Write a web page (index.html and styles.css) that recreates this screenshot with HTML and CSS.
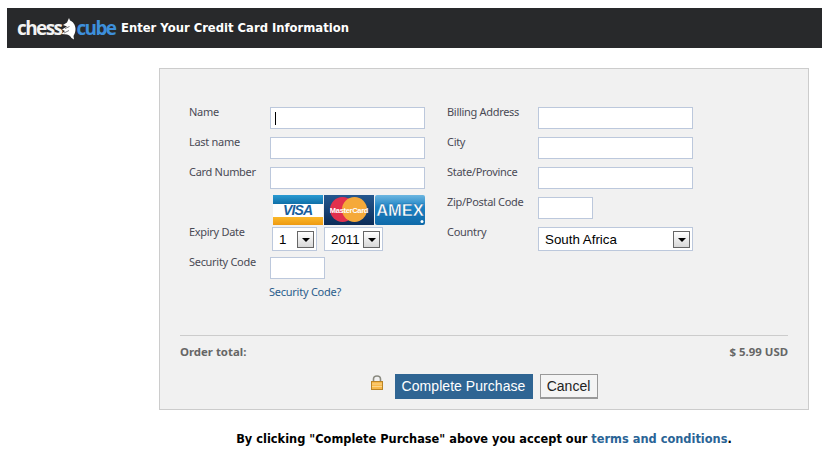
FILE: index.html
```html
<!DOCTYPE html>
<html lang="en">
  <head>
    <meta charset="UTF-8" />
    <meta name="viewport" content="width=device-width, initial-scale=1.0" />
    <title>Enter Your Credit Card Information</title>
    <link rel="stylesheet" href="styles.css">
  </head>
  <body>
    <div class="header">
      <div class="logo">
        <span class="logo-chess">chess</span>
        <svg class="knight" width="15" height="22" viewBox="0 0 15 22">
          <path d="M8 0 L9 2.5 C12 3.5 14.5 7 14.5 11 C14.5 14 13.5 16 12.5 18 L13 21.5 L10.5 20 C9.5 18 8 17 6 16.5 L0.5 16 L4 13 L1 11.5 L6 8.5 L2 7 L6 4.5 Z" fill="#fff" />
          <path d="M3 15 L8 12.5 M4 10.5 L8.5 8.5" stroke="#77797c" stroke-width="1" fill="none" />
        </svg>
        <span class="logo-cube">cube</span>
      </div>
      <h1>Enter Your Credit Card Information</h1>
    </div>

    <form class="panel">
      <div class="columns">
        <div class="col col-left">
          <div class="row">
            <label for="name">Name</label>
            <input type="text" id="name" class="has-caret" />
          </div>
          <div class="row">
            <label for="lastname">Last name</label>
            <input type="text" id="lastname" />
          </div>
          <div class="row">
            <label for="card">Card Number</label>
            <input type="text" id="card" />
          </div>
          <div class="cards">
            <svg width="50" height="30" viewBox="0 0 50 30">
              <defs>
                <linearGradient id="visaTop" x1="0" y1="0" x2="0" y2="1">
                  <stop offset="0" stop-color="#2a9bd2" />
                  <stop offset="1" stop-color="#0f6fa8" />
                </linearGradient>
                <linearGradient id="visaBottom" x1="0" y1="0" x2="0" y2="1">
                  <stop offset="0" stop-color="#fbb829" />
                  <stop offset="1" stop-color="#ee9a12" />
                </linearGradient>
                <linearGradient id="mcBack" x1="0" y1="0" x2="0" y2="1">
                  <stop offset="0" stop-color="#24588f" />
                  <stop offset="1" stop-color="#0c2c58" />
                </linearGradient>
                <linearGradient id="amexBack" x1="0" y1="0" x2="0" y2="1">
                  <stop offset="0" stop-color="#6cb6e0" />
                  <stop offset="0.4" stop-color="#1c82c4" />
                  <stop offset="1" stop-color="#0f69a8" />
                </linearGradient>
              </defs>
              <rect width="50" height="30" fill="#fff" />
              <rect width="50" height="9" fill="url(#visaTop)" />
              <rect y="22" width="50" height="8" fill="url(#visaBottom)" />
              <text x="25" y="20" class="visa-text" textLength="30">VISA</text>
            </svg>
            <svg width="50" height="30" viewBox="0 0 50 30">
              <rect width="50" height="30" fill="url(#mcBack)" />
              <circle cx="18.5" cy="14.5" r="12.5" fill="#e2304d" />
              <circle cx="30.5" cy="14.5" r="12.5" fill="#f5a93a" />
              <text x="25" y="18" class="mc-text">MasterCard</text>
            </svg>
            <svg width="50" height="30" viewBox="0 0 50 30">
              <rect width="50" height="30" rx="2" fill="url(#amexBack)" />
              <text x="25" y="21" class="amex-text">AMEX</text>
              <circle cx="47" cy="26.5" r="1.5" fill="#fff" />
            </svg>
          </div>
          <div class="row row-select">
            <label>Expiry Date</label>
            <div class="select select-month">
              <span>1</span>
              <span class="arrow"></span>
            </div>
            <div class="select select-year">
              <span>2011</span>
              <span class="arrow"></span>
            </div>
          </div>
          <div class="row">
            <label for="code">Security Code</label>
            <input type="text" id="code" class="short" />
          </div>
          <a class="help" href="#">Security Code?</a>
        </div>

        <div class="col col-right">
          <div class="row">
            <label for="address">Billing Address</label>
            <input type="text" id="address" />
          </div>
          <div class="row">
            <label for="city">City</label>
            <input type="text" id="city" />
          </div>
          <div class="row">
            <label for="state">State/Province</label>
            <input type="text" id="state" />
          </div>
          <div class="row">
            <label for="zip">Zip/Postal Code</label>
            <input type="text" id="zip" class="short" />
          </div>
          <div class="row row-select">
            <label>Country</label>
            <div class="select select-country">
              <span>South Africa</span>
              <span class="arrow"></span>
            </div>
          </div>
        </div>
      </div>

      <div class="order">
        <span>Order total:</span>
        <span>$ 5.99 USD</span>
      </div>

      <div class="actions">
        <svg class="lock" width="12" height="15" viewBox="0 0 12 15">
          <path d="M2.5 7 V4 C2.5 0 9.5 0 9.5 4 V7" fill="none" stroke="#8a8a80" stroke-width="1.6" />
          <rect x="0.5" y="6.5" width="11" height="8" fill="#f8b84a" stroke="#b98428" />
          <path d="M1 9 H11 M1 11.5 H11" stroke="#fbd68c" />
        </svg>
        <button type="button" class="btn btn-primary">Complete Purchase</button>
        <button type="button" class="btn btn-cancel">Cancel</button>
      </div>
    </form>

    <p class="terms">By clicking "Complete Purchase" above you accept our <a href="#">terms and conditions</a>.</p>
  </body>
</html>
```

FILE: styles.css
```css
* {
  margin: 0;
  padding: 0;
  box-sizing: border-box;
}
body {
  font-family: "Noto Sans", sans-serif;
  background: #fff;
  padding: 8px 0 0 7px;
  overflow: hidden;
}

.header {
  height: 40px;
  background: #28292b;
  display: flex;
  align-items: center;
  padding-left: 10px;
}
.logo {
  display: flex;
  align-items: center;
  width: 104px;
  height: 40px;
  font-family: "Open Sans", sans-serif;
  font-size: 19px;
  font-weight: 700;
  letter-spacing: -1.6px;
}
.logo-chess {
  color: #f2f2f2;
}
.logo-cube {
  color: #3d8fdb;
}
.knight {
  flex: none;
  margin-top: 1px;
}
.header h1 {
  font-family: "DejaVu Sans", sans-serif;
  font-size: 11.6px;
  font-weight: bold;
  color: #fff;
}

.panel {
  width: 650px;
  height: 342px;
  margin: 20px 0 0 152px;
  padding: 38px 20px 0;
  background: #f1f1f1;
  border: 1px solid #ccc;
}
.columns {
  display: flex;
  height: 228px;
  padding-left: 9px;
}
.col-left {
  width: 258px;
}
.col-left label {
  width: 81px;
}
.col-right label {
  width: 91px;
}

.row {
  display: flex;
  align-items: flex-start;
  height: 30px;
}
label {
  flex: none;
  font-size: 11px;
  line-height: 12px;
  letter-spacing: -0.3px;
  margin-top: -1px;
  color: #4a4a55;
}
input {
  width: 155px;
  height: 22px;
  background: #fff;
  border: 1px solid #bcc8dc;
  outline: none;
}
input.short {
  width: 55px;
}
input.has-caret {
  background: #fff linear-gradient(#000, #000) no-repeat 4px 4px / 1px 13px;
}

.cards {
  display: flex;
  gap: 1px;
  height: 32px;
  margin: -2px 0 0 84px;
}
.cards svg {
  display: block;
}
.visa-text {
  font: italic bold 14px "Liberation Sans", sans-serif;
  fill: #175f9e;
  text-anchor: middle;
}
.mc-text {
  font: bold 7.5px "Liberation Sans", sans-serif;
  letter-spacing: -0.3px;
  fill: #fff;
  text-anchor: middle;
}
.amex-text {
  font: bold 16.5px "Liberation Sans", sans-serif;
  fill: #fff;
  stroke: #0f5f9e;
  stroke-width: 0.4px;
  text-anchor: middle;
}

.select {
  display: flex;
  align-items: center;
  justify-content: space-between;
  height: 24px;
  padding: 0 2px 0 6px;
  background: #fff;
  border: 1px solid #bcc8dc;
  font-family: "Liberation Sans", sans-serif;
  font-size: 13.33px;
  color: #000;
}
.select-month {
  width: 45px;
  margin-left: 2px;
}
.select-year {
  width: 59px;
  margin-left: 7px;
}
.select-country {
  width: 155px;
}
.arrow {
  width: 17px;
  height: 17px;
  border: 1px solid #666;
  background: linear-gradient(#fff, #d8d8d8);
  position: relative;
}
.arrow::after {
  content: "";
  position: absolute;
  left: 4px;
  top: 6px;
  border-top: 4px solid #000;
  border-left: 4px solid transparent;
  border-right: 4px solid transparent;
}

.help {
  display: block;
  margin: -2px 0 0 80px;
  font-size: 11px;
  line-height: 14px;
  letter-spacing: -0.25px;
  color: #2a5d8c;
  text-decoration: none;
}

.order {
  display: flex;
  justify-content: space-between;
  height: 39px;
  padding-top: 9px;
  border-top: 1px solid #ccc;
  font-size: 11.4px;
  line-height: 14px;
  font-weight: bold;
  color: #666;
}

.actions {
  display: flex;
  justify-content: center;
  align-items: flex-start;
}
.lock {
  margin: 1px 12px 0 0;
}
.btn {
  height: 25px;
  padding-bottom: 1px;
  font-family: "Liberation Sans", sans-serif;
  font-size: 14px;
  cursor: pointer;
}
.btn-primary {
  width: 138px;
  background: #2f6593;
  color: #fff;
  border: none;
  letter-spacing: 0.05px;
}
.btn-cancel {
  width: 58px;
  margin-left: 7px;
  background: #f4f4f4;
  color: #222;
  border: 1px solid #999;
  border-bottom-width: 2px;
}

.terms {
  width: 650px;
  margin: 21px 0 0 152px;
  text-align: center;
  font-family: "DejaVu Sans", sans-serif;
  font-size: 11.4px;
  line-height: 16px;
  font-weight: bold;
  color: #000;
}
.terms a {
  color: #2a6496;
  text-decoration: none;
}
```
